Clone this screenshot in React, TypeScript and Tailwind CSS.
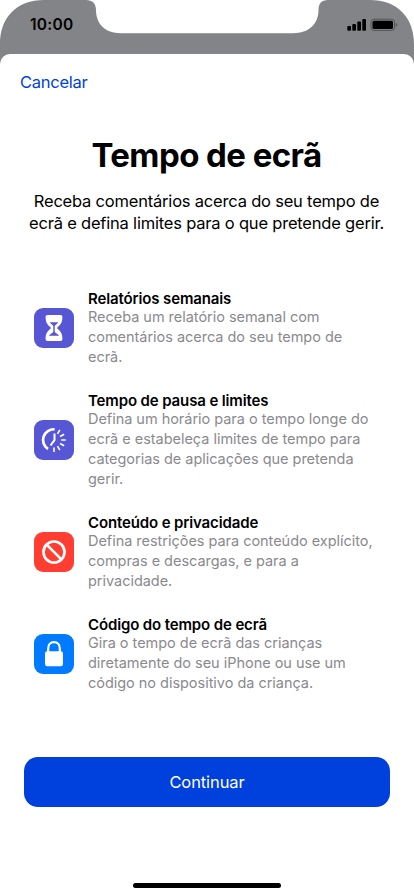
import type { ReactNode } from "react";

type Feature = {
  title: string;
  lines: string[];
  tile: string;
  icon: ReactNode;
};

const features: Feature[] = [
  {
    title: "Relatórios semanais",
    lines: ["Receba um relatório semanal com", "comentários acerca do seu tempo de", "ecrã."],
    tile: "bg-[#5756d5]",
    icon: <HourglassIcon />,
  },
  {
    title: "Tempo de pausa e limites",
    lines: [
      "Defina um horário para o tempo longe do",
      "ecrã e estabeleça limites de tempo para",
      "categorias de aplicações que pretenda",
      "gerir.",
    ],
    tile: "bg-[#5756d5]",
    icon: <DowntimeIcon />,
  },
  {
    title: "Conteúdo e privacidade",
    lines: ["Defina restrições para conteúdo explícito,", "compras e descargas, e para a", "privacidade."],
    tile: "bg-[#ff3d31]",
    icon: <RestrictedIcon />,
  },
  {
    title: "Código do tempo de ecrã",
    lines: [
      "Gira o tempo de ecrã das crianças",
      "diretamente do seu iPhone ou use um",
      "código no dispositivo da criança.",
    ],
    tile: "bg-[#007aff]",
    icon: <LockIcon />,
  },
];

function HourglassIcon() {
  return (
    <svg viewBox="0 0 40 40" className="h-10 w-10">
      <path
        d="M13.500 7h13c1.200 0 1.900.8 1.900 1.900 0 5.200-1.600 7.600-4.400 9.800-.9.700-.9 1.900 0 2.600 2.800 2.200 4.400 4.500 4.400 9.700 0 1.200-.7 2-1.900 2h-13c-1.200 0-1.900-.8-1.900-2 0-5.200 1.600-7.500 4.400-9.700.9-.7.900-1.900 0-2.600-2.800-2.200-4.400-4.600-4.400-9.800 0-1.100.7-1.900 1.900-1.900Z"
        fill="#fff"
      />
      <path
        d="M15.800 14.200h8.400c-.6 1.200-1.600 2.100-2.700 2.900-.6.400-.8.800-.8 1.500v4.600c0 .7.200 1.100.8 1.500 1.500.9 2.900 1.800 3.600 3.100H14.900c.7-1.300 2.100-2.200 3.600-3.100.6-.4.800-.8.800-1.500v-4.600c0-.7-.2-1.100-.8-1.500-1.100-.8-2.100-1.700-2.700-2.900Z"
        fill="#5756d5"
      />
    </svg>
  );
}

function DowntimeIcon() {
  return (
    <svg viewBox="0 0 40 40" className="h-10 w-10" fill="none" stroke="#fff">
      <path d="M20.600 9.300a10.700 10.700 0 0 0-6.600 19.700" strokeWidth="2.700" />
      <path d="M20.500 13.500v6.700l-4 5.300" strokeWidth="2" strokeLinejoin="round" />
      <path
        d="M27.200 20h4.600M26.100 16.500l4-2.300M23.500 13.800l2.300-4M26.100 23.500l4 2.300M23.500 26.200l2.300 4M20 27.400V32"
        strokeWidth="1.600"
      />
    </svg>
  );
}

function RestrictedIcon() {
  return (
    <svg viewBox="0 0 40 40" className="h-10 w-10" fill="none" stroke="#fff" strokeWidth="2.700">
      <circle cx="20" cy="20" r="10.500" />
      <path d="m12.600 12.600 14.800 14.800" />
    </svg>
  );
}

function LockIcon() {
  return (
    <svg viewBox="0 0 40 40" className="h-10 w-10">
      <path d="M14.200 19v-4.500c0-4 2.500-6.400 5.800-6.400s5.800 2.400 5.800 6.400V19" fill="none" stroke="#fff" strokeWidth="2.200" />
      <rect x="11" y="17.300" width="18" height="14.900" rx="2.200" fill="#fff" />
    </svg>
  );
}

function StatusBar() {
  return (
    <header className="relative h-[54px] shrink-0">
      <svg viewBox="0 0 414 64" className="absolute top-0 left-0 h-16 w-[414px]">
        <path
          d="M0 64V44C0 17 17 0 44 0H86C92.500 0 96 3.500 96 10C96 24 105 33.200 121 33.200H293C309 33.200 318.500 24 318.500 10C318.500 3.500 321.500 0 328 0H370C397 0 414 17 414 44V64Z"
          fill="#838488"
        />
      </svg>
      <div className="relative flex h-[50px] items-center justify-between pr-4 pl-[30px]">
        <span className="text-[15.500px] font-semibold tracking-[0.25px] text-black">10:00</span>
        <svg viewBox="0 0 51 14" className="h-3.5 w-[51px]">
          <rect x="0.300" y="8" width="3.700" height="4.700" rx="0.900" />
          <rect x="5.300" y="6" width="3.700" height="6.700" rx="0.900" />
          <rect x="10.300" y="3.500" width="3.700" height="9.200" rx="0.900" />
          <rect x="15.300" y="1" width="3.700" height="11.700" rx="0.900" />
          <rect x="24" y="1.200" width="23.500" height="11.300" rx="3" fill="none" stroke="#55565a" strokeWidth="1" />
          <rect x="25.500" y="2.700" width="20.500" height="8.300" rx="1.500" />
          <path d="M48.800 5c1.900.6 1.900 3.400 0 4Z" fill="#55565a" />
        </svg>
      </div>
    </header>
  );
}

export default function App() {
  return (
    <div className="flex h-[896px] w-[414px] flex-col overflow-hidden bg-white font-['Inter','Liberation_Sans',sans-serif] text-black">
      <StatusBar />
      <main className="relative flex flex-1 flex-col rounded-t-[10px] bg-white">
        <button className="mt-[17px] ml-5 self-start text-[16.500px] leading-[22px] tracking-[-0.25px] text-[#0040dd]">
          Cancelar
        </button>
        <h1 className="mt-[41px] pr-px text-center text-[33px] leading-[42px] font-bold tracking-[-0.57px]">
          Tempo de ecrã
        </h1>
        <p className="mt-[14px] pr-px text-center text-[16.500px] leading-[22px] tracking-[-0.2px] whitespace-nowrap">
          <span className="block">Receba comentários acerca do seu tempo de</span>
          <span className="block">ecrã e defina limites para o que pretende gerir.</span>
        </p>
        <ul className="mt-[55px] flex flex-col gap-6 pl-[34px]">
          {features.map((f) => (
            <li key={f.title} className="flex items-center gap-[14px] whitespace-nowrap">
              <div className={`h-10 w-10 shrink-0 rounded-[9px] ${f.tile}`}>{f.icon}</div>
              <div>
                <h2 className="text-[15px] leading-5 font-semibold tracking-[-0.13px]">{f.title}</h2>
                <div className="-mt-0.5 text-[14.500px] leading-5 tracking-[-0.03px] text-[#8a8a8e]">
                  {f.lines.map((line) => (
                    <span key={line} className="block">{line}</span>
                  ))}
                </div>
              </div>
            </li>
          ))}
        </ul>
        <button className="mx-6 mt-16 h-[50px] rounded-[14px] bg-[#0040dd] text-[16.500px] tracking-[-0.1px] text-white">
          Continuar
        </button>
        <div className="mx-auto mt-auto mb-2 h-[5px] w-[148px] rounded-full bg-black" />
      </main>
    </div>
  );
}
